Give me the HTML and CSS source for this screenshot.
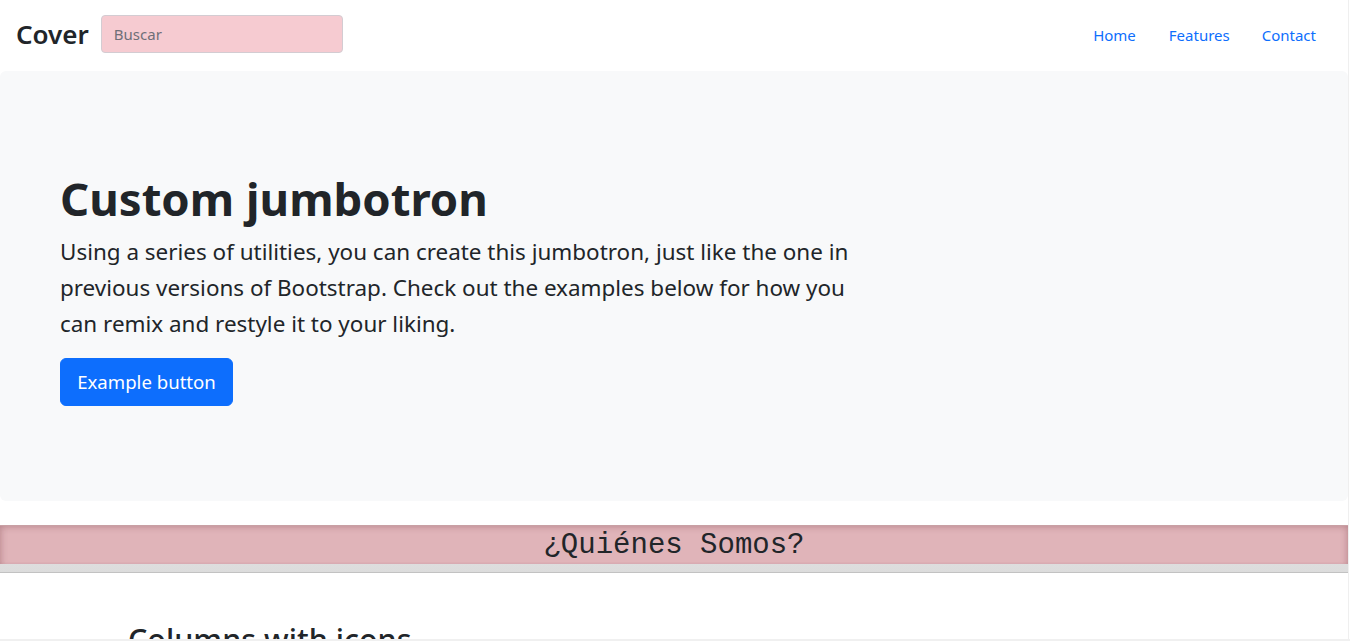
FILE: index.html
```html
<!DOCTYPE html>
<html lang="es">
<head>
<meta charset="utf-8">
<title>Cover</title>
<link rel="stylesheet" href="styles.css">
</head>
<body>
<div class="page">
  <header class="navbar">
    <a class="brand" href="#">Cover</a>
    <input class="search" type="text" placeholder="Buscar">
    <nav class="nav">
      <a class="nav-link" href="#">Home</a>
      <a class="nav-link" href="#">Features</a>
      <a class="nav-link" href="#">Contact</a>
    </nav>
  </header>

  <section class="jumbotron">
    <div class="jumbo-inner">
      <h1 class="jumbo-title">Custom jumbotron</h1>
      <p class="jumbo-text">Using a series of utilities, you can create this jumbotron, just like the one in previous versions of Bootstrap. Check out the examples below for how you can remix and restyle it to your liking.</p>
      <button class="btn-primary" type="button">Example button</button>
    </div>
  </section>

  <div class="about-band">
    <h2 class="about-title">¿Quiénes Somos?</h2>
  </div>

  <section class="features">
    <h2 class="features-title">Columns with icons</h2>
  </section>
</div>
<div class="bottom-edge"></div>
</body>
</html>
```

FILE: styles.css
```css
* { box-sizing: border-box; }

html, body {
  margin: 0;
  padding: 0;
  background: #ffffff;
}

body {
  font-family: "Noto Sans", "Open Sans", sans-serif;
  color: #212529;
  font-size: 16px;
  line-height: 1.5;
  overflow: hidden;
}

.page {
  width: 1349px;
  border-right: 1px solid #efefef;
  min-height: 641px;
}

.navbar {
  display: flex;
  align-items: center;
  height: 71px;
  padding: 0 16px 3px 16px;
}

.brand {
  font-size: 26px;
  font-weight: 600;
  color: #212529;
  text-decoration: none;
  margin-right: 12px;
  line-height: 1.5;
}

.search {
  width: 242px;
  height: 38px;
  padding: 6px 12px;
  font-family: inherit;
  font-size: 15px;
  color: #212529;
  background: #f6cbd1;
  border: 1px solid #d3ccd2;
  border-radius: 4px;
  outline: none;
}

.search::placeholder { color: #6f6f78; }

.nav {
  margin-left: auto;
  margin-top: 2px;
  display: flex;
}

.nav-link {
  color: #0d6efd;
  text-decoration: none;
  font-size: 15px;
  padding: 8px 16px;
}

.nav-link:first-child { padding-right: 17px; }

.jumbotron {
  background: #f8f9fa;
  border-radius: 6px;
  padding: 48px;
  margin-bottom: 24px;
  width: 1348px;
  height: 430px;
}

.jumbo-inner {
  padding: 52px 12px 0;
}

.jumbo-title {
  margin: 0 0 8px;
  font-size: 45.5px;
  font-weight: 700;
  line-height: 1.2;
}

.jumbo-text {
  width: 819px;
  margin: 0 0 16px;
  font-size: 22.45px;
  line-height: 36px;
}

.btn-primary {
  font-family: inherit;
  font-size: 18.6px;
  line-height: 30px;
  padding: 8px 16px;
  color: #ffffff;
  background: #0d6efd;
  border: 1px solid #0d6efd;
  border-radius: 6px;
  width: 173px;
  white-space: nowrap;
  height: 48px;
}

.about-band {
  width: 1348px;
  background: linear-gradient(#e6e6e6, #dcdcdc);
  border-bottom: 1px solid #c2c2c2;
  padding-bottom: 8px;
}

.about-title {
  margin: 0;
  height: 39px;
  background: #e0b4b9;
  border-top: 1px solid #c8a0a4;
  box-shadow: inset 0 3px 5px rgba(120, 60, 70, 0.18), inset 6px 0 6px -4px rgba(120, 60, 70, 0.2), inset -6px 0 6px -4px rgba(120, 60, 70, 0.2);
  font-family: "Liberation Mono", "DejaVu Sans Mono", monospace;
  font-weight: 400;
  font-size: 29px;
  line-height: 40px;
  text-align: center;
  color: #212529;
}

.features {
  width: 1140px;
  margin: 0 auto;
  padding: 48px 24px;
}

.features-title {
  margin: 0;
  font-size: 30.5px;
  font-weight: 500;
  line-height: 1.2;
}

.bottom-edge {
  position: fixed;
  left: 0;
  right: 0;
  bottom: 0;
  height: 2px;
  background: #f0f0f0;
}
```
